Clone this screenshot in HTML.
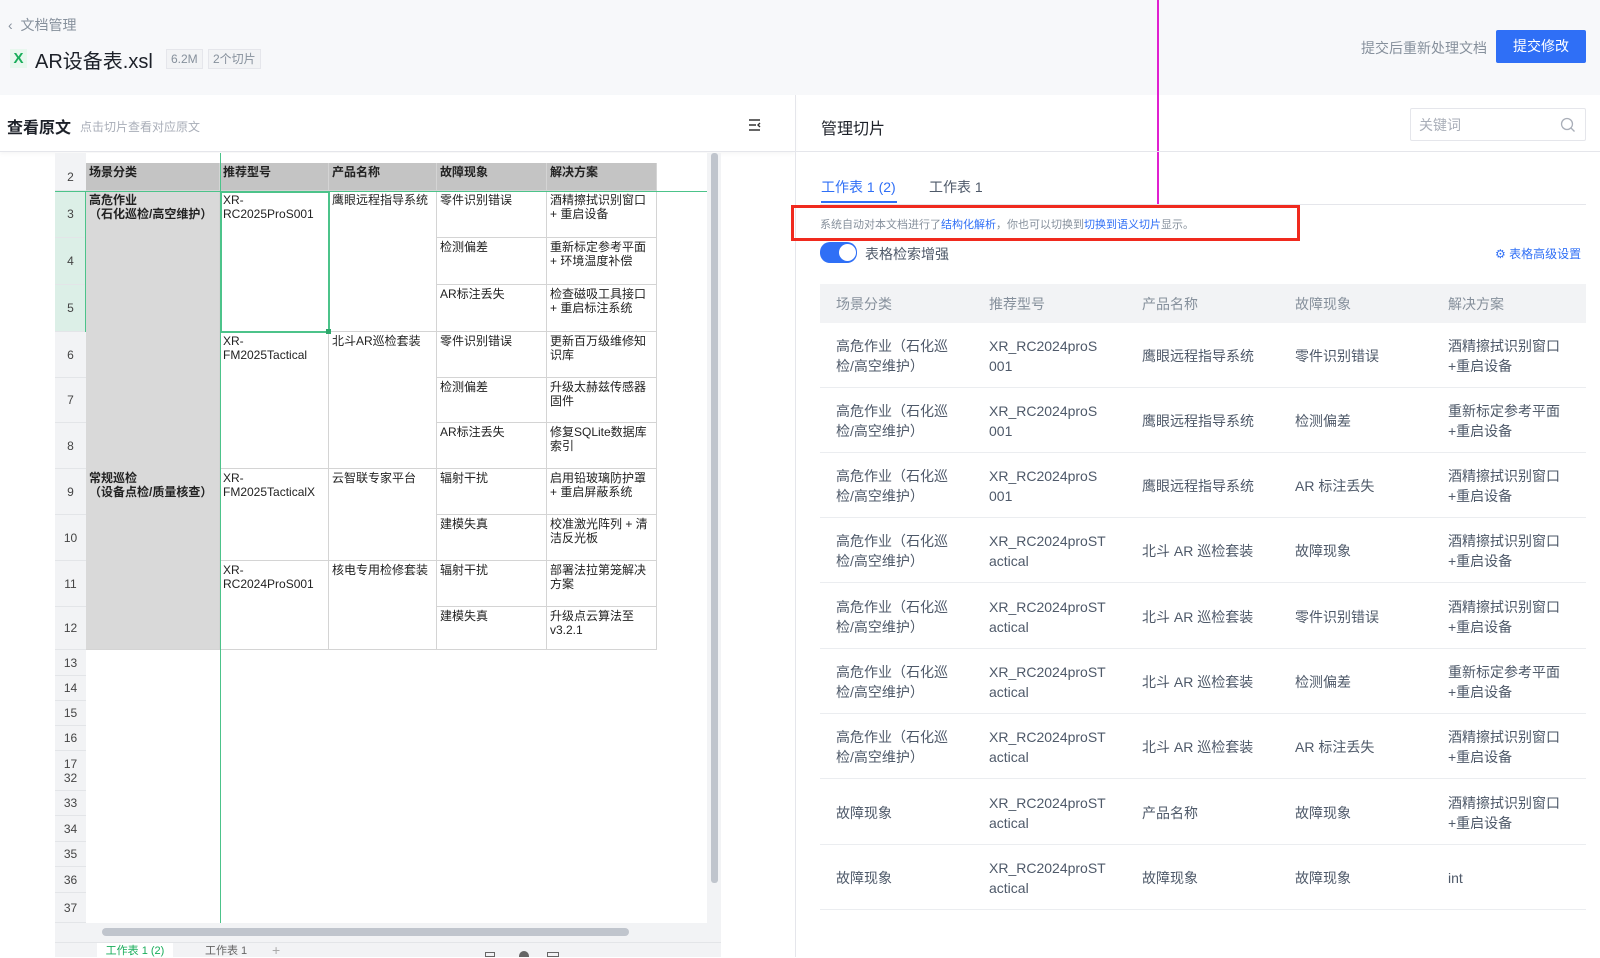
<!DOCTYPE html>
<html><head><meta charset="utf-8">
<style>
*{margin:0;padding:0;box-sizing:border-box}
body{width:1600px;height:957px;overflow:hidden;background:#fff;font-family:"Liberation Sans","Noto Sans CJK SC",sans-serif;position:relative;color:#1d2129}
.a{position:absolute}
.top{left:0;top:0;width:1600px;height:95px;background:#f7f8fa}
.c{position:absolute;border-right:1px solid #d4d4d4;border-bottom:1px solid #d4d4d4;font-size:12px;line-height:14px;padding:2px 3px;color:#222;background:#fff}
.h{background:#c4c4c4;font-weight:bold}
.g{background:#d9d9d9;font-weight:bold}
.rn{position:absolute;left:55px;width:31px;font-size:12px;color:#444;display:flex;align-items:center;justify-content:center;border-bottom:1px solid #e3e5e8;background:#f2f3f5}
.tr{position:absolute;left:820px;width:766px;height:65px;border-bottom:1px solid #ebedf0;font-size:14px;color:#4e5969;line-height:20px}
.tr div{position:absolute;top:0;height:65px;display:flex;align-items:center}
</style></head><body>
<div class="a top"></div>
<div class="a" style="left:8px;top:15px;font-size:14px;color:#86909c">‹&nbsp; 文档管理</div>
<div class="a" style="left:10px;top:49px;width:17px;height:19px;background:#e8f7ee;color:#1aad5b;font-size:15px;text-align:center;line-height:19px;font-weight:bold">X</div>
<div class="a" style="left:35px;top:45px;font-size:20px;color:#1d2129">AR设备表.xsl</div>
<div class="a" style="left:166px;top:49px;height:20px;padding:0 4px;border:1px solid #e5e6eb;background:#f2f3f5;font-size:12px;line-height:18px;color:#86909c">6.2M</div>
<div class="a" style="left:208px;top:49px;height:20px;padding:0 4px;border:1px solid #e5e6eb;background:#f2f3f5;font-size:12px;line-height:18px;color:#86909c">2个切片</div>
<div class="a" style="left:1361px;top:38px;font-size:14px;color:#86909c">提交后重新处理文档</div>
<div class="a" style="left:1496px;top:30px;width:90px;height:33px;background:#2f6ff6;color:#fff;font-size:14px;text-align:center;line-height:33px;border-radius:2px">提交修改</div>
<div class="a" style="left:1157px;top:0;width:2px;height:207px;background:#e020d0"></div>

<!-- left panel -->
<div class="a" style="left:0;top:95px;width:795px;height:57px;border-bottom:1px solid #e5e6eb;box-shadow:0 2px 4px rgba(0,0,0,.04)"></div>
<div class="a" style="left:7px;top:114px;font-size:16px;font-weight:bold;color:#1d2129">查看原文</div>
<div class="a" style="left:80px;top:118px;font-size:12px;color:#a9aeb8">点击切片查看对应原文</div>
<svg class="a" style="left:748px;top:118px" width="14" height="14" viewBox="0 0 14 14"><path d="M1 2h11M1 7h7M1 12h11M12 5l-2 2 2 2" stroke="#333" stroke-width="1.4" fill="none"/></svg>
<div class="a" style="left:795px;top:95px;width:1px;height:862px;background:#e5e6eb"></div>

<!-- sheet -->
<div class="a" style="left:55px;top:153px;width:666px;height:804px;background:#f2f3f5"></div>
<div class="a" style="left:86px;top:153px;width:621px;height:770px;background:#fff"></div>
<div class="rn" style="top:163px;height:28px">2</div>
<div class="rn" style="top:191px;height:47px;background:#dcefe7">3</div>
<div class="rn" style="top:238px;height:47px;background:#dcefe7">4</div>
<div class="rn" style="top:285px;height:47px;background:#dcefe7">5</div>
<div class="rn" style="top:332px;height:46px">6</div>
<div class="rn" style="top:378px;height:45px">7</div>
<div class="rn" style="top:423px;height:46px">8</div>
<div class="rn" style="top:469px;height:46px">9</div>
<div class="rn" style="top:515px;height:46px">10</div>
<div class="rn" style="top:561px;height:46px">11</div>
<div class="rn" style="top:607px;height:43px">12</div>
<div class="rn" style="top:650px;height:26px">13</div>
<div class="rn" style="top:676px;height:25px">14</div>
<div class="rn" style="top:701px;height:25px">15</div>
<div class="rn" style="top:726px;height:25px">16</div>
<div class="rn" style="top:751px;height:40px;flex-direction:column;line-height:14px">17<br>32</div>
<div class="rn" style="top:791px;height:25px">33</div>
<div class="rn" style="top:816px;height:26px">34</div>
<div class="rn" style="top:842px;height:25px">35</div>
<div class="rn" style="top:867px;height:26px">36</div>
<div class="rn" style="top:893px;height:30px">37</div>

<div class="c h" style="left:86px;top:163px;width:134px;height:28px">场景分类</div>
<div class="c h" style="left:220px;top:163px;width:109px;height:28px">推荐型号</div>
<div class="c h" style="left:329px;top:163px;width:108px;height:28px">产品名称</div>
<div class="c h" style="left:437px;top:163px;width:110px;height:28px">故障现象</div>
<div class="c h" style="left:547px;top:163px;width:110px;height:28px">解决方案</div>

<div class="c g" style="left:86px;top:191px;width:134px;height:278px;border-bottom:none">高危作业<br>（石化巡检/高空维护）</div>
<div class="c g" style="left:86px;top:469px;width:134px;height:181px">常规巡检<br>（设备点检/质量核查）</div>

<div class="c" style="left:220px;top:191px;width:109px;height:141px">XR-<br>RC2025ProS001</div>
<div class="c" style="left:220px;top:332px;width:109px;height:137px">XR-<br>FM2025Tactical</div>
<div class="c" style="left:220px;top:469px;width:109px;height:92px">XR-<br>FM2025TacticalX</div>
<div class="c" style="left:220px;top:561px;width:109px;height:89px">XR-<br>RC2024ProS001</div>

<div class="c" style="left:329px;top:191px;width:108px;height:141px">鹰眼远程指导系统</div>
<div class="c" style="left:329px;top:332px;width:108px;height:137px">北斗AR巡检套装</div>
<div class="c" style="left:329px;top:469px;width:108px;height:92px">云智联专家平台</div>
<div class="c" style="left:329px;top:561px;width:108px;height:89px">核电专用检修套装</div>

<div class="c" style="left:437px;top:191px;width:110px;height:47px">零件识别错误</div>
<div class="c" style="left:437px;top:238px;width:110px;height:47px">检测偏差</div>
<div class="c" style="left:437px;top:285px;width:110px;height:47px">AR标注丢失</div>
<div class="c" style="left:437px;top:332px;width:110px;height:46px">零件识别错误</div>
<div class="c" style="left:437px;top:378px;width:110px;height:45px">检测偏差</div>
<div class="c" style="left:437px;top:423px;width:110px;height:46px">AR标注丢失</div>
<div class="c" style="left:437px;top:469px;width:110px;height:46px">辐射干扰</div>
<div class="c" style="left:437px;top:515px;width:110px;height:46px">建模失真</div>
<div class="c" style="left:437px;top:561px;width:110px;height:46px">辐射干扰</div>
<div class="c" style="left:437px;top:607px;width:110px;height:43px">建模失真</div>

<div class="c" style="left:547px;top:191px;width:110px;height:47px">酒精擦拭识别窗口<br>+ 重启设备</div>
<div class="c" style="left:547px;top:238px;width:110px;height:47px">重新标定参考平面<br>+ 环境温度补偿</div>
<div class="c" style="left:547px;top:285px;width:110px;height:47px">检查磁吸工具接口<br>+ 重启标注系统</div>
<div class="c" style="left:547px;top:332px;width:110px;height:46px">更新百万级维修知<br>识库</div>
<div class="c" style="left:547px;top:378px;width:110px;height:45px">升级太赫兹传感器<br>固件</div>
<div class="c" style="left:547px;top:423px;width:110px;height:46px">修复SQLite数据库<br>索引</div>
<div class="c" style="left:547px;top:469px;width:110px;height:46px">启用铅玻璃防护罩<br>+ 重启屏蔽系统</div>
<div class="c" style="left:547px;top:515px;width:110px;height:46px">校准激光阵列 + 清<br>洁反光板</div>
<div class="c" style="left:547px;top:561px;width:110px;height:46px">部署法拉第笼解决<br>方案</div>
<div class="c" style="left:547px;top:607px;width:110px;height:43px">升级点云算法至<br>v3.2.1</div>

<div class="a" style="left:220px;top:153px;width:1px;height:770px;background:#4cc38a"></div>
<div class="a" style="left:55px;top:191px;width:652px;height:1px;background:#4cc38a"></div>
<div class="a" style="left:85px;top:191px;width:1px;height:141px;background:#4cc38a"></div>
<div class="a" style="left:220px;top:191px;width:110px;height:142px;border:2px solid #4cc38a"></div>
<div class="a" style="left:326px;top:329px;width:5px;height:5px;background:#2ea86b"></div>

<div class="a" style="left:711px;top:153px;width:7px;height:730px;background:#c0c5cd;border-radius:3px"></div>
<div class="a" style="left:102px;top:928px;width:527px;height:8px;background:#c0c5cd;border-radius:4px"></div>
<div class="a" style="left:55px;top:942px;width:666px;height:1px;background:#e3e5e8"></div>
<div class="a" style="left:97px;top:943px;width:76px;height:14px;background:#fff;color:#1aad5b;font-size:11px;text-align:center;padding-top:3px;line-height:11px">工作表 1 (2)</div>
<div class="a" style="left:205px;top:946px;font-size:11px;color:#666;line-height:11px">工作表 1</div>
<div class="a" style="left:272px;top:943px;font-size:14px;color:#aaa;line-height:14px">+</div>
<div class="a" style="left:485px;top:952px;width:10px;height:5px;border:1px solid #666"></div>
<div class="a" style="left:519px;top:951px;width:10px;height:6px;border-radius:5px 5px 0 0;background:#666"></div>
<div class="a" style="left:547px;top:952px;width:12px;height:5px;border:1px solid #666"></div>

<!-- right panel -->
<div class="a" style="left:796px;top:151px;width:804px;height:1px;background:#e5e6eb"></div>
<div class="a" style="left:821px;top:115px;font-size:16px;color:#1d2129">管理切片</div>
<div class="a" style="left:1410px;top:108px;width:176px;height:33px;border:1px solid #e5e6eb;border-radius:2px;background:#fff"></div>
<div class="a" style="left:1419px;top:115px;font-size:14px;color:#a9aeb8">关键词</div>
<svg class="a" style="left:1560px;top:117px" width="16" height="16" viewBox="0 0 16 16"><circle cx="7" cy="7" r="5.5" stroke="#a9aeb8" stroke-width="1.3" fill="none"/><path d="M11 11l3.5 3.5" stroke="#a9aeb8" stroke-width="1.3"/></svg>
<div class="a" style="left:821px;top:177px;font-size:14px;color:#2f6ff6">工作表 1 (2)</div>
<div class="a" style="left:821px;top:201px;width:76px;height:2px;background:#2f6ff6"></div>
<div class="a" style="left:929px;top:177px;font-size:14px;color:#4e5969">工作表 1</div>
<div class="a" style="left:820px;top:204px;width:766px;height:1px;background:#e5e6eb"></div>
<div class="a" style="left:791px;top:205px;width:509px;height:36px;border:3px solid #f02a1e"></div>
<div class="a" style="left:820px;top:216px;font-size:11px;color:#86909c">系统自动对本文档进行了<span style="color:#2f6ff6">结构化解析</span>，你也可以切换到<span style="color:#2f6ff6">切换到语义切片</span>显示。</div>
<div class="a" style="left:820px;top:242px;width:37px;height:21px;background:#2f6ff6;border-radius:10px"></div>
<div class="a" style="left:839px;top:244px;width:17px;height:17px;background:#fff;border-radius:9px"></div>
<div class="a" style="left:865px;top:244px;font-size:14px;color:#4e5969">表格检索增强</div>
<div class="a" style="left:1495px;top:245px;font-size:12px;color:#2f6ff6">⚙ 表格高级设置</div>

<div class="a" style="left:820px;top:284px;width:766px;height:39px;background:#f2f3f5"></div>
<div class="a" style="left:836px;top:294px;font-size:14px;color:#86909c">场景分类</div>
<div class="a" style="left:989px;top:294px;font-size:14px;color:#86909c">推荐型号</div>
<div class="a" style="left:1142px;top:294px;font-size:14px;color:#86909c">产品名称</div>
<div class="a" style="left:1295px;top:294px;font-size:14px;color:#86909c">故障现象</div>
<div class="a" style="left:1448px;top:294px;font-size:14px;color:#86909c">解决方案</div>

<div class="tr" style="top:323px"><div style="left:16px">高危作业（石化巡<br>检/高空维护）</div><div style="left:169px">XR_RC2024proS<br>001</div><div style="left:322px">鹰眼远程指导系统</div><div style="left:475px">零件识别错误</div><div style="left:628px">酒精擦拭识别窗口<br>+重启设备</div></div>
<div class="tr" style="top:388px"><div style="left:16px">高危作业（石化巡<br>检/高空维护）</div><div style="left:169px">XR_RC2024proS<br>001</div><div style="left:322px">鹰眼远程指导系统</div><div style="left:475px">检测偏差</div><div style="left:628px">重新标定参考平面<br>+重启设备</div></div>
<div class="tr" style="top:453px"><div style="left:16px">高危作业（石化巡<br>检/高空维护）</div><div style="left:169px">XR_RC2024proS<br>001</div><div style="left:322px">鹰眼远程指导系统</div><div style="left:475px">AR 标注丢失</div><div style="left:628px">酒精擦拭识别窗口<br>+重启设备</div></div>
<div class="tr" style="top:518px"><div style="left:16px">高危作业（石化巡<br>检/高空维护）</div><div style="left:169px">XR_RC2024proST<br>actical</div><div style="left:322px">北斗 AR 巡检套装</div><div style="left:475px">故障现象</div><div style="left:628px">酒精擦拭识别窗口<br>+重启设备</div></div>
<div class="tr" style="top:584px"><div style="left:16px">高危作业（石化巡<br>检/高空维护）</div><div style="left:169px">XR_RC2024proST<br>actical</div><div style="left:322px">北斗 AR 巡检套装</div><div style="left:475px">零件识别错误</div><div style="left:628px">酒精擦拭识别窗口<br>+重启设备</div></div>
<div class="tr" style="top:649px"><div style="left:16px">高危作业（石化巡<br>检/高空维护）</div><div style="left:169px">XR_RC2024proST<br>actical</div><div style="left:322px">北斗 AR 巡检套装</div><div style="left:475px">检测偏差</div><div style="left:628px">重新标定参考平面<br>+重启设备</div></div>
<div class="tr" style="top:714px"><div style="left:16px">高危作业（石化巡<br>检/高空维护）</div><div style="left:169px">XR_RC2024proST<br>actical</div><div style="left:322px">北斗 AR 巡检套装</div><div style="left:475px">AR 标注丢失</div><div style="left:628px">酒精擦拭识别窗口<br>+重启设备</div></div>
<div class="tr" style="top:780px"><div style="left:16px">故障现象</div><div style="left:169px">XR_RC2024proST<br>actical</div><div style="left:322px">产品名称</div><div style="left:475px">故障现象</div><div style="left:628px">酒精擦拭识别窗口<br>+重启设备</div></div>
<div class="tr" style="top:845px"><div style="left:16px">故障现象</div><div style="left:169px">XR_RC2024proST<br>actical</div><div style="left:322px">故障现象</div><div style="left:475px">故障现象</div><div style="left:628px">int</div></div>
</body></html>
